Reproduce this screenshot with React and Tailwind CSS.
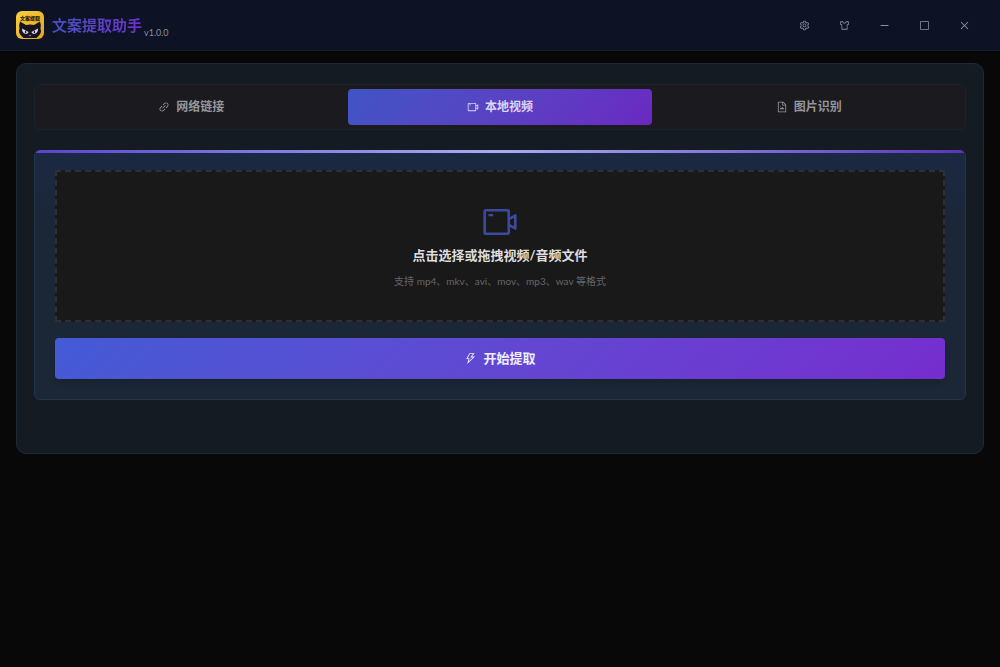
import { useState } from "react";
import {
  AiOutlineBorder,
  AiOutlineClose,
  AiOutlineFileImage,
  AiOutlineLink,
  AiOutlineMinus,
  AiOutlineSetting,
  AiOutlineSkin,
  AiOutlineThunderbolt,
  AiOutlineVideoCamera,
} from "react-icons/ai";

const windowButtons = [
  { label: "设置", icon: AiOutlineSetting },
  { label: "主题", icon: AiOutlineSkin },
  { label: "最小化", icon: AiOutlineMinus },
  { label: "最大化", icon: AiOutlineBorder },
  { label: "关闭", icon: AiOutlineClose },
];

const tabs = [
  { id: "link", label: "网络链接", icon: AiOutlineLink },
  { id: "video", label: "本地视频", icon: AiOutlineVideoCamera },
  { id: "image", label: "图片识别", icon: AiOutlineFileImage },
];

const Logo = () => (
  <svg viewBox="0 0 28 28" className="size-7" aria-hidden="true">
    <defs>
      <linearGradient id="logoBg" x1="0" y1="0" x2="1" y2="1">
        <stop offset="0" stopColor="#f8d040" />
        <stop offset="1" stopColor="#e3a41c" />
      </linearGradient>
    </defs>
    <rect width="28" height="28" rx="6" fill="url(#logoBg)" />
    <text
      x="14"
      y="9"
      fontSize="5"
      fontWeight="900"
      textAnchor="middle"
      fill="#2b2208"
    >
      文案提取
    </text>
    {/* cat head */}
    <path
      d="M4 10.5 L10 14 Q14 13 18 14 L24 10.5 Q25.5 14 24.5 18 Q26 21 23 24.5 L20.5 27 H7.5 L5 24.5 Q2 21 3.5 18 Q2.500 14 4 10.500Z"
      fill="#15131f"
    />
    {/* eyes */}
    <path d="M6 17.500 L12.600 21 Q11.500 23.500 9 22.800 Q6 21.800 6 17.500Z" fill="#dcd9ee" />
    <path d="M22 17.500 L15.400 21 Q16.500 23.500 19 22.800 Q22 21.800 22 17.500Z" fill="#dcd9ee" />
    <ellipse cx="9.600" cy="21" rx="0.700" ry="1.300" fill="#15131f" />
    <ellipse cx="18.400" cy="21" rx="0.700" ry="1.300" fill="#15131f" />
    <path d="M12.800 24 L14 25 L15.200 24" stroke="#b9a6c9" strokeWidth="0.700" fill="none" />
  </svg>
);

const TitleBar = () => (
  <header className="flex h-[51px] items-center justify-between border-b border-[#151c2c] bg-[#0d1224] pr-5 pl-4">
    <div className="flex items-center gap-2">
      <Logo />
      <div className="flex items-end gap-0.5">
        <h1 className="bg-linear-to-r from-[#4352c0] to-[#6a2fc8] bg-clip-text text-[15px] leading-6 font-bold text-transparent">
          文案提取助手
        </h1>
        <span className="-mb-0.5 text-[9px] leading-3 text-[#8b8f9c]">v1.0.0</span>
      </div>
    </div>
    <nav className="flex gap-2">
      {windowButtons.map(({ label, icon: Icon }) => (
        <button
          key={label}
          type="button"
          aria-label={label}
          className="flex size-8 items-center justify-center text-[11px] text-[#8d93a1]"
        >
          <Icon />
        </button>
      ))}
    </nav>
  </header>
);

const App = () => {
  const [active, setActive] = useState("video");

  return (
    <div className="min-h-screen bg-[#080809] font-['Lato','Noto_Sans_CJK_SC',sans-serif]">
      <TitleBar />
      <main className="px-4 pt-3">
        <section className="rounded-[10px] border border-[#1f2a38] bg-[#141b23] px-[17px] pt-5 pb-[53px]">
          <div
            role="tablist"
            className="grid grid-cols-3 gap-1 rounded-md border border-[#1f2228] bg-[#1b1a1e] p-1"
          >
            {tabs.map(({ id, label, icon: Icon }) => (
              <button
                key={id}
                type="button"
                role="tab"
                aria-selected={active === id}
                onClick={() => setActive(id)}
                className={`flex h-9 items-center justify-center gap-1.5 rounded-[4px] text-xs font-bold ${
                  active === id
                    ? "bg-linear-135 from-[#3f55c4] to-[#6a28c2] text-[#dcd6f5]"
                    : "text-[#95959a]"
                }`}
              >
                <Icon />
                {label}
              </button>
            ))}
          </div>

          <div className="mt-5 overflow-hidden rounded-md border border-t-0 border-[#24354a] bg-[#1b2736]">
            <div className="h-[3px] bg-linear-to-r from-[#5a45c8] via-[#a9adf0] to-[#5a35b4]" />
            <div className="flex flex-col gap-4 bg-linear-to-b from-[#1b2843] to-[#1b2736] to-30% px-5 pt-[17px] pb-5">
              <label className="flex h-[152px] cursor-pointer flex-col items-center justify-center border-2 border-dashed border-[#2b2f36] bg-[#191919] pt-0.5">
                <input type="file" accept="video/*,audio/*" className="sr-only" />
                <AiOutlineVideoCamera className="text-[38px] text-[#3c4a9c]" />
                <span className="mt-0.5 text-[13px] leading-6 font-bold text-[#dededf]">
                  点击选择或拖拽视频/音频文件
                </span>
                <span className="mt-1 text-[10px] leading-5 text-[#66666a]">
                  支持 mp4、mkv、avi、mov、mp3、wav 等格式
                </span>
              </label>
              <button
                type="button"
                className="flex h-[41px] items-center justify-center gap-1.5 rounded-[4px] bg-linear-135 from-[#435bd6] to-[#752dce] text-[13px] font-bold text-[#f1edfc] shadow-md"
              >
                <AiOutlineThunderbolt />
                开始提取
              </button>
            </div>
          </div>
        </section>
      </main>
    </div>
  );
};

export default App;
